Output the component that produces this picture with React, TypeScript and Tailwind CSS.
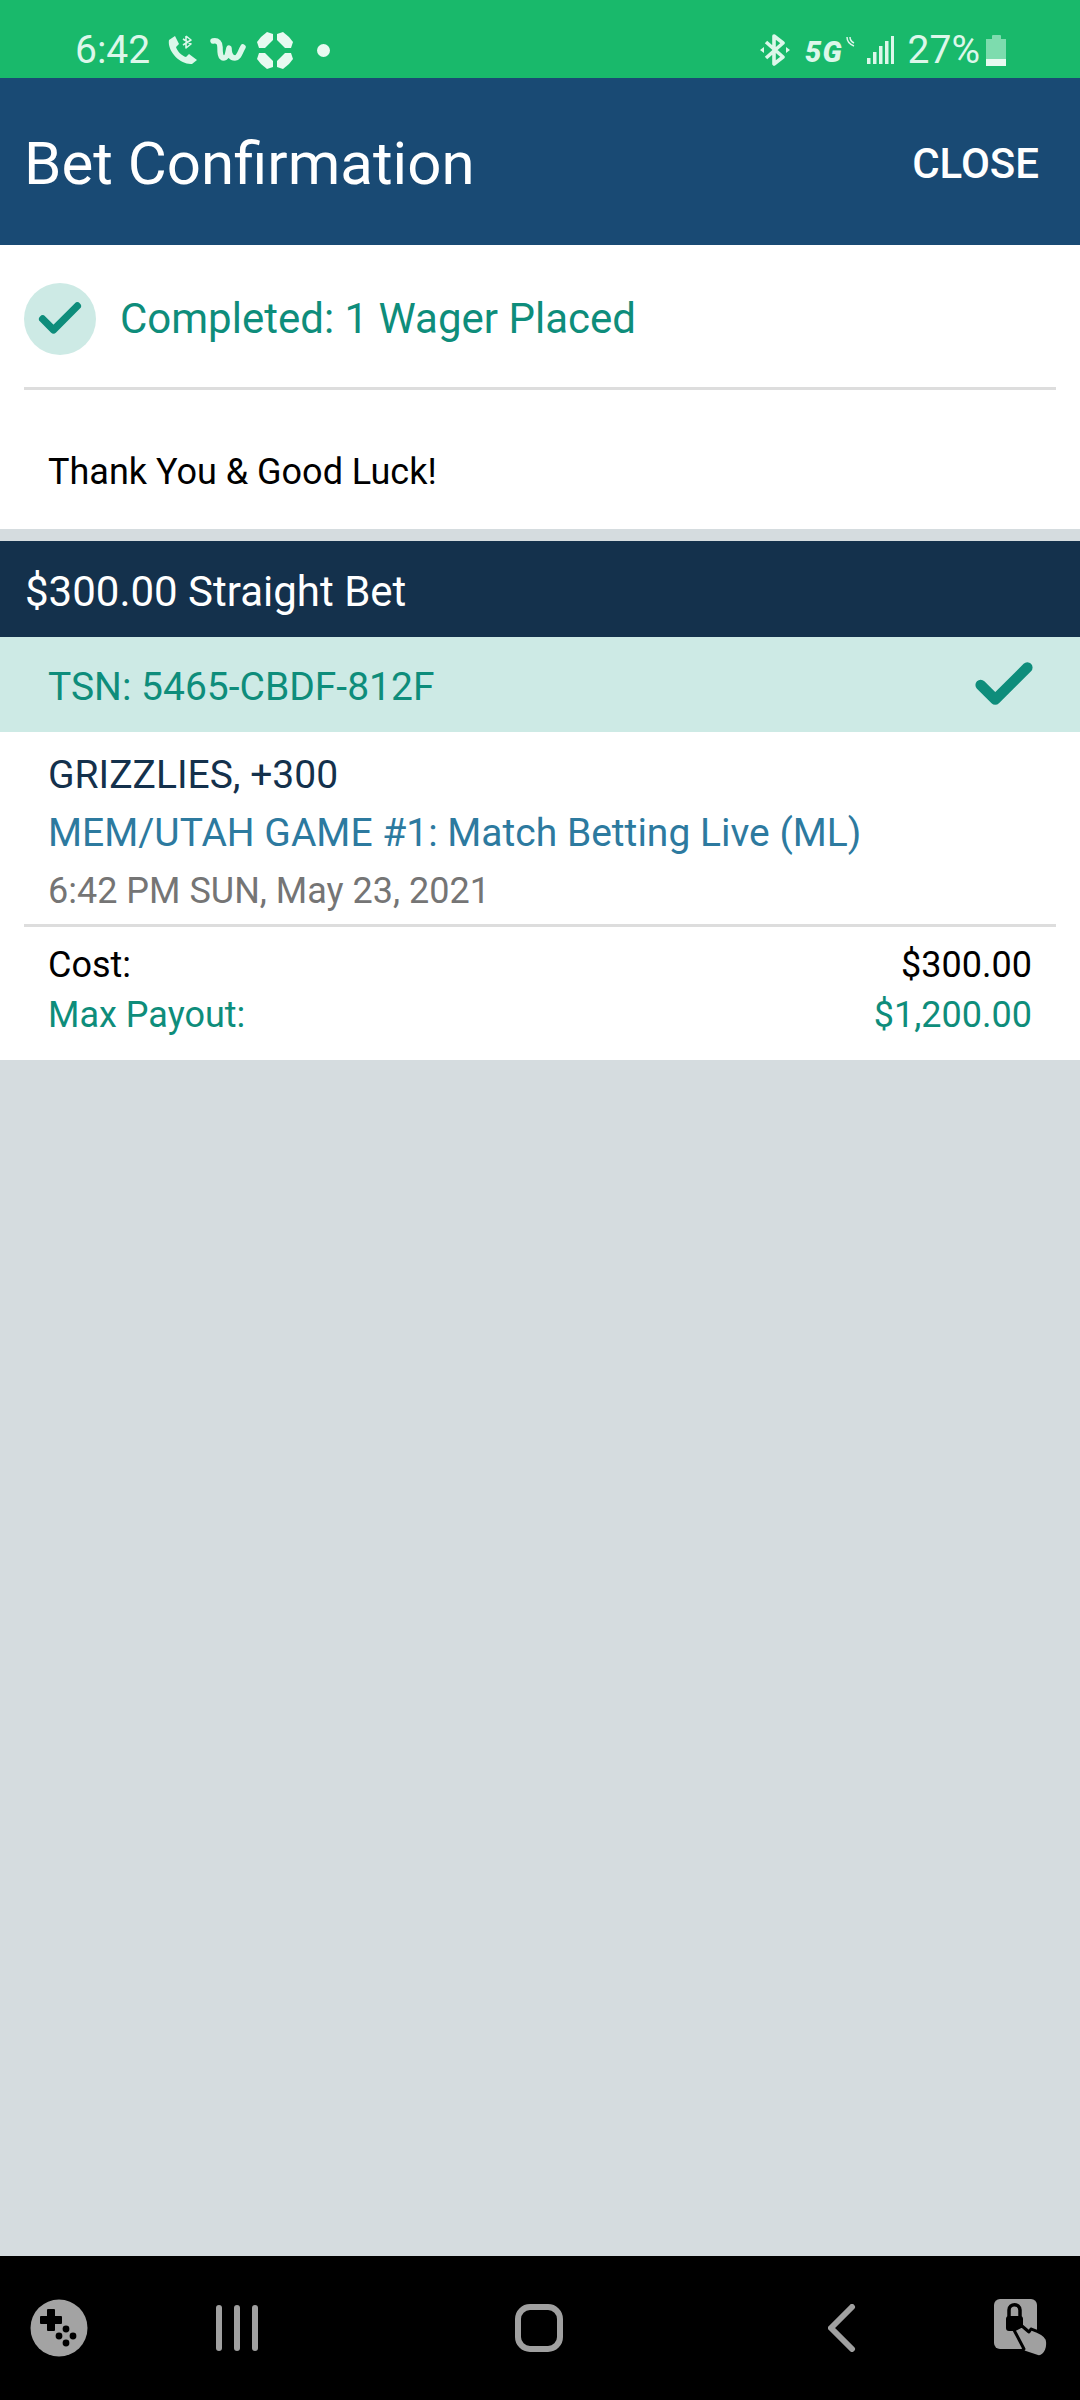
import { Check } from "lucide-react";

const roboto = "font-['Roboto',sans-serif]";

function CallIcon() {
  return (
    <svg width="30" height="30" viewBox="0 0 30 30" fill="#dcf7ea">
      <path d="M1 5 L7 1 L11 9 L8 12 C9 16 14 21 18 22 L21 19 L29 25 L24 29 C12 30 -1 16 1 5 Z" />
      <path d="M18 1 V13 L23 9 L15 4 M18 1 L23 5 L15 10" stroke="#dcf7ea" strokeWidth="1.6" fill="none" strokeLinejoin="round" />
    </svg>
  );
}

function WishIcon() {
  return (
    <svg width="36" height="26" viewBox="0 0 36 26" fill="none">
      <path d="M3 4 C8 3 10 6 10 10 C10 15 10 21 14 21 C18 21 18 14 19 11 C19 15 20 21 25 21 C29 21 30 15 33 10" stroke="#dcf7ea" strokeWidth="5.5" strokeLinecap="round" strokeLinejoin="round" />
    </svg>
  );
}

function FlowerIcon() {
  return (
    <svg width="36" height="37" viewBox="0 0 36 37" fill="#e8faf1">
      <path d="M4 5 L10 0 L16 2 L16 8 L8 16 L2 16 L0 10 Z" />
      <path d="M32 5 L26 0 L20 2 L20 8 L28 16 L34 16 L36 10 Z" />
      <path d="M4 32 L10 37 L16 35 L16 29 L8 21 L2 21 L0 27 Z" />
      <path d="M32 32 L26 37 L20 35 L20 29 L28 21 L34 21 L36 27 Z" />
    </svg>
  );
}

function BluetoothIcon() {
  return (
    <svg width="30" height="32" viewBox="0 0 30 32" fill="none" stroke="#dcf7ea" strokeWidth="3.6">
      <path d="M6 8 L23 23 L14 30 V2 L23 9 L6 24" strokeLinejoin="round" />
      <path d="M0 16 L4 13 V19 Z M30 16 L26 13 V19 Z" fill="#dcf7ea" stroke="none" />
    </svg>
  );
}

function RadioWaves() {
  return (
    <svg width="9" height="11" viewBox="0 0 9 11" fill="none" stroke="#dcf7ea" strokeWidth="1.5">
      <path d="M1 1 C1 5 3 8 8 10" />
      <path d="M4 1 C4 4 6 6 8 7" />
    </svg>
  );
}

function SignalIcon() {
  return (
    <svg width="27" height="28" viewBox="0 0 27 28" fill="#dcf7ea">
      <rect x="0" y="22" width="3.5" height="6" />
      <rect x="6" y="16" width="3.5" height="12" />
      <rect x="12" y="10" width="3.5" height="18" />
      <rect x="18" y="5" width="3.5" height="23" />
      <rect x="24" y="0" width="3" height="28" />
    </svg>
  );
}

function GameIcon() {
  return (
    <svg width="58" height="58" viewBox="0 0 58 58">
      <circle cx="29" cy="29" r="28.5" fill="#a3a3a3" />
      <path d="M18 11 h6 v7 h7 v6 h-7 v7 h-6 v-7 h-7 v-6 h7 Z" fill="#000" stroke="#000" strokeLinejoin="round" strokeWidth="2" />
      <circle cx="36" cy="30" r="3.4" fill="#000" />
      <circle cx="29" cy="37" r="3.4" fill="#000" />
      <circle cx="43" cy="37" r="3.4" fill="#000" />
      <circle cx="36" cy="44" r="3.4" fill="#000" />
    </svg>
  );
}

function RecentsIcon() {
  return (
    <svg width="42" height="46" viewBox="0 0 42 46" fill="#a0a0a0">
      <rect x="0" y="0" width="6" height="46" rx="3" />
      <rect x="18" y="0" width="6" height="46" rx="3" />
      <rect x="36" y="0" width="6" height="46" rx="3" />
    </svg>
  );
}

function BackIcon() {
  return (
    <svg width="28" height="48" viewBox="0 0 28 48" fill="none" stroke="#a0a0a0" strokeWidth="6" strokeLinecap="round" strokeLinejoin="round">
      <path d="M24 3 L3 24 L24 45" />
    </svg>
  );
}

function LockTouchIcon() {
  return (
    <svg width="55" height="58" viewBox="0 0 55 58">
      <rect x="0" y="0" width="43" height="50" rx="6" fill="#a0a0a0" />
      <rect x="12" y="17" width="17" height="15" rx="3" fill="#000" />
      <path d="M15 18 V11 C15 4 26 4 26 11 V18" fill="none" stroke="#000" strokeWidth="3.5" />
      <path d="M20 31 L30 50 L27 52 L45 58 C52 56 55 48 53 40 C50 34 43 32 37 30 L35 33 L28 27 Z" fill="#a0a0a0" stroke="#000" strokeWidth="3" strokeLinejoin="round" />
    </svg>
  );
}

export default function App() {
  return (
    <div className={`flex h-[2400px] w-[1080px] flex-col bg-[#d5dcdf] ${roboto}`}>
      {/* Status bar */}
      <div className="flex h-[78px] items-center justify-between bg-[#19b96b] pl-[75px] pr-[74px] pt-[22px] text-[#dcf7ea]">
        <div className="flex items-center">
          <span className="text-[39px] leading-none">6:42</span>
          <span className="ml-[18px]"><CallIcon /></span>
          <span className="ml-[12px]"><WishIcon /></span>
          <span className="ml-[11px]"><FlowerIcon /></span>
          <span className="ml-[24px] h-[13px] w-[13px] rounded-full bg-[#e8faf1]" />
        </div>
        <div className="flex items-center">
          <BluetoothIcon />
          <span className="ml-[15px] mt-[4px] text-[29px] font-black italic leading-none tracking-[1px]">5G</span>
          <span className="mb-[18px] ml-[3px]"><RadioWaves /></span>
          <span className="ml-[12px]"><SignalIcon /></span>
          <span className="ml-[14px] text-[39px] leading-none">27%</span>
          <div className="ml-[6px] flex flex-col items-center">
            <div className="h-[4px] w-[9px] rounded-t-[1px] bg-[#7ddcae]" />
            <div className="flex h-[27px] w-[20px] flex-col justify-end bg-[#7ddcae]">
              <div className="h-[7px] bg-[#e8faf1]" />
            </div>
          </div>
        </div>
      </div>

      {/* Header */}
      <div className="flex h-[167px] items-center justify-between bg-[#194a74] pl-[24px] pr-[41px] pt-[4px] text-white">
        <h1 className="text-[60px] font-normal leading-none">Bet Confirmation</h1>
        <button className="text-[42px] font-medium leading-none">CLOSE</button>
      </div>

      {/* Confirmation */}
      <div className="bg-white">
        <div className="mx-6 flex h-[145px] items-center gap-6 border-b-[3px] border-[#dddddd] pt-[5px]">
          <div className="flex h-[72px] w-[72px] items-center justify-center rounded-full bg-[#cdeae5]">
            <Check className="h-[52px] w-[52px] text-[#0e8d7b]" strokeWidth={3.4} />
          </div>
          <span className="text-[42px] leading-none text-[#0e8d7b]">Completed: 1 Wager Placed</span>
        </div>
        <div className="flex h-[139px] items-center pl-[48px] pt-[24px] text-[36px] text-black">Thank You &amp; Good Luck!</div>
      </div>

      <div className="mt-[12px] flex h-[96px] items-center bg-[#14314c] pl-[25px] pt-[4px] text-[42px] text-white">
        $300.00 Straight Bet
      </div>
      <div className="flex h-[95px] items-center justify-between bg-[#cdeae5] pl-[48px] pr-[41px] text-[39px] text-[#0e8d7b]">
        <span className="pt-[6px]">TSN: 5465-CBDF-812F</span>
        <Check className="h-[70px] w-[70px]" strokeWidth={3.6} />
      </div>

      {/* Bet details */}
      <div className="bg-white">
        <div className="mx-6 border-b-[3px] border-[#dddddd] px-6 pb-[4px] pt-[14px]">
          <p className="text-[39px] leading-[58px] text-[#14314c]">GRIZZLIES, +300</p>
          <p className="text-[39px] leading-[58px] text-[#2d7a9f]">MEM/UTAH GAME #1: Match Betting Live (ML)</p>
          <p className="text-[36px] leading-[58px] text-[#757575]">6:42 PM SUN, May 23, 2021</p>
        </div>
        <div className="px-[48px] pb-[20px] pt-[13px] text-[36px] leading-[50px]">
          <div className="flex justify-between text-black">
            <span>Cost:</span>
            <span>$300.00</span>
          </div>
          <div className="flex justify-between text-[#0e8d7b]">
            <span>Max Payout:</span>
            <span>$1,200.00</span>
          </div>
        </div>
      </div>

      <div className="flex-1" />

      {/* Navigation bar */}
      <div className="flex h-[144px] items-center bg-black">
        <div className="ml-[30px]"><GameIcon /></div>
        <div className="ml-[128px]"><RecentsIcon /></div>
        <div className="ml-[257px] h-[48px] w-[48px] rounded-[15px] border-[6px] border-[#a0a0a0]" />
        <div className="ml-[265px]"><BackIcon /></div>
        <div className="ml-[138px]"><LockTouchIcon /></div>
      </div>
    </div>
  );
}
